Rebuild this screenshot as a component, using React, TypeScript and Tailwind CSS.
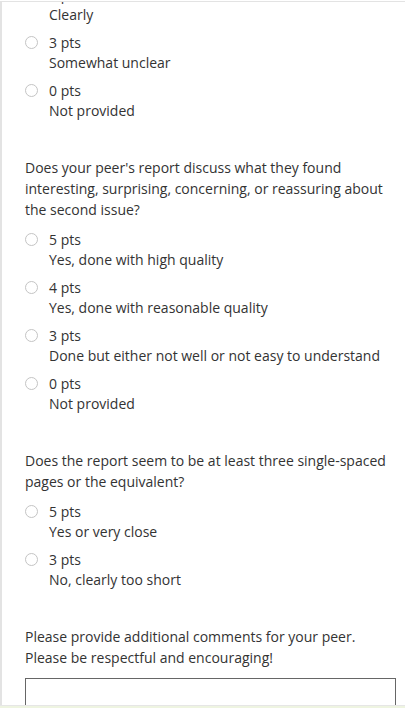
import React from 'react';

type Option = { pts: string; label: string };

const Radio: React.FC = () => (
    <span className="mt-[3px] block h-[13px] w-[13px] shrink-0 rounded-full border-[1.5px] border-[#c4c4c4] bg-white" />
);

const OptionRow: React.FC<{ option: Option; className?: string }> = ({ option, className }) => (
    <div className={`flex gap-[11px] ${className ?? ''}`}>
        <Radio />
        <div className="leading-5">
            <div>{option.pts}</div>
            <div>{option.label}</div>
        </div>
    </div>
);

const Criterion: React.FC<{ question: string; options: Option[] }> = ({ question, options }) => (
    <div className="mt-9">
        <p className="leading-[21px]">{question}</p>
        <div className="mt-[10px] flex flex-col gap-2">
            {options.map((o) => (
                <OptionRow key={o.pts} option={o} />
            ))}
        </div>
    </div>
);

const App: React.FC = () => {
    return (
        <div
            className="flex h-[708px] w-[405px] flex-col overflow-hidden bg-white pt-px text-[14px] text-[#333]"
            style={{ fontFamily: '"Open Sans", "Liberation Sans", sans-serif' }}
        >
            <div className="flex-1 overflow-hidden border-l-2 border-t border-[#e3e3e3] pl-[23px] pr-[8px]">
                {/* tail of the previous criterion */}
                <div className="mt-[-17px] flex flex-col gap-2">
                    <OptionRow option={{ pts: '5 pts', label: 'Clearly' }} />
                    <OptionRow option={{ pts: '3 pts', label: 'Somewhat unclear' }} />
                    <OptionRow option={{ pts: '0 pts', label: 'Not provided' }} />
                </div>

                <Criterion
                    question="Does your peer's report discuss what they found interesting, surprising, concerning, or reassuring about the second issue?"
                    options={[
                        { pts: '5 pts', label: 'Yes, done with high quality' },
                        { pts: '4 pts', label: 'Yes, done with reasonable quality' },
                        { pts: '3 pts', label: 'Done but either not well or not easy to understand' },
                        { pts: '0 pts', label: 'Not provided' },
                    ]}
                />

                <Criterion
                    question="Does the report seem to be at least three single-spaced pages or the equivalent?"
                    options={[
                        { pts: '5 pts', label: 'Yes or very close' },
                        { pts: '3 pts', label: 'No, clearly too short' },
                    ]}
                />

                <div className="mt-9">
                    <p className="leading-[21px]">
                        Please provide additional comments for your peer.
                        <br />
                        Please be respectful and encouraging!
                    </p>
                    <textarea className="mt-[10px] block h-24 w-[371px] resize-none border border-[#666] outline-none" />
                </div>
            </div>
            <div className="h-px shrink-0 bg-[#e6e6e6]" />
            <div className="h-[2px] shrink-0 bg-[#eef4e1]" />
        </div>
    );
};

export default App;
